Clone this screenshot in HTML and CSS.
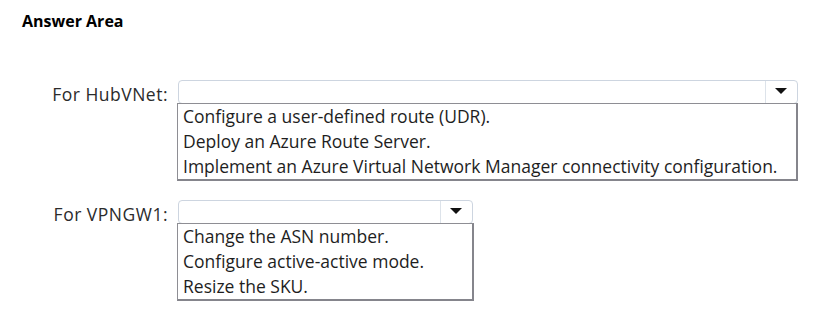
FILE: index.html
```html
<!DOCTYPE html>
<html lang="en">

<head>
  <meta charset="UTF-8">
  <title>Answer Area</title>
  <link rel="stylesheet" href="styles.css">
</head>

<body>
  <h1 class="title">Answer Area</h1>
  <section class="answers">
    <div class="field">
      <span class="field-label">For HubVNet:</span>
      <div class="dropdown dropdown-wide">
        <div class="dropdown-box">
          <span class="dropdown-value"></span>
          <span class="dropdown-arrow"></span>
        </div>
        <ul class="dropdown-list">
          <li>Configure a user-defined route (UDR).</li>
          <li>Deploy an Azure Route Server.</li>
          <li>Implement an Azure Virtual Network Manager connectivity configuration.</li>
        </ul>
      </div>
    </div>
    <div class="field">
      <span class="field-label">For VPNGW1:</span>
      <div class="dropdown dropdown-narrow">
        <div class="dropdown-box">
          <span class="dropdown-value"></span>
          <span class="dropdown-arrow"></span>
        </div>
        <ul class="dropdown-list">
          <li>Change the ASN number.</li>
          <li>Configure active-active mode.</li>
          <li>Resize the SKU.</li>
        </ul>
      </div>
    </div>
  </section>
</body>

</html>
```

FILE: styles.css
```css
html {
  box-sizing: border-box;
  font-family: 'Open Sans', sans-serif;
  font-size: 17.5px;
  color: #1a1a1a;
}

*,
*:after,
*:before {
  box-sizing: inherit;
}

body {
  margin: 0;
  padding: 11px 0 0 22px;
  background-color: #fff;
}

.title {
  margin: 0;
  font-size: 16px;
  font-weight: bold;
  line-height: 20px;
  color: #000;
}

.answers {
  padding: 49px 0 0 18px;
}

.field {
  display: grid;
  grid-template-columns: 128px auto;
  column-gap: 10px;
  align-items: start;
  margin-bottom: 19px;
}

.field-label {
  padding-top: 3px;
  text-align: right;
  line-height: 22px;
  letter-spacing: .5px;
  color: #2b2b2b;
}

.dropdown-wide {
  width: 620px;
}

.dropdown-narrow {
  width: 295px;
}

.dropdown-box {
  display: flex;
  height: 24px;
  border: 1px solid #cdd5e0;
  border-radius: 4px;
  background-color: #fff;
}

.dropdown-value {
  flex: 1;
}

.dropdown-arrow {
  position: relative;
  width: 32px;
  border-left: 1px solid #dde3ea;
}

.dropdown-arrow:after {
  content: "";
  position: absolute;
  top: 7px;
  left: 9px;
  border-left: 6px solid transparent;
  border-right: 6px solid transparent;
  border-top: 6px solid #111;
}

.dropdown-list {
  list-style: none;
  margin: -1px 0 0 -1px;
  padding: 0 0 0 5px;
  border: 1px solid #8e8e94;
  border-right: 2px solid #85858c;
  border-bottom: 2px solid #85858c;
  width: calc(100% + 1px);
}

.dropdown-narrow .dropdown-list {
  width: calc(100% + 2px);
}

.dropdown-list li {
  height: 25px;
  line-height: 25px;
  white-space: nowrap;
  color: #1e1e1e;
}
```
